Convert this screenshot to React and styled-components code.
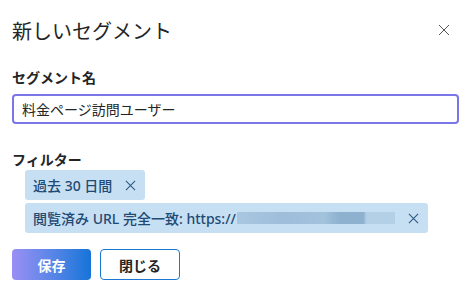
import styled, { createGlobalStyle } from "styled-components";

const GlobalStyle = createGlobalStyle`
  body {
    margin: 0;
    background: #fff;
    font-family: "Noto Sans", "Noto Sans CJK JP", sans-serif;
  }
`;

const CloseIcon = ({ size = 12, color = "currentColor", width = 1.2 }) => (
  <svg width={size} height={size} viewBox="0 0 12 12">
    <path d="M1 1L11 11M11 1L1 11" stroke={color} strokeWidth={width} fill="none" />
  </svg>
);

const App = () => {
  return (
    <>
      <GlobalStyle />
      <Dialog>
        <Header>
          <Title>新しいセグメント</Title>
          <IconButton>
            <CloseIcon size={12} color="#555" width={1} />
          </IconButton>
        </Header>
        <Label>セグメント名</Label>
        <Input>料金ページ訪問ユーザー</Input>
        <Label top={26}>フィルター</Label>
        <Chips>
          <Chip>
            過去 30 日間
            <ChipClose>
              <CloseIcon size={11} color="#2d5a85" />
            </ChipClose>
          </Chip>
          <Chip>
            閲覧済み URL 完全一致: https://
            <Blur />
            <ChipClose>
              <CloseIcon size={11} color="#2d5a85" />
            </ChipClose>
          </Chip>
        </Chips>
        <Actions>
          <Button primary>保存</Button>
          <Button>閉じる</Button>
        </Actions>
      </Dialog>
    </>
  );
};

const Dialog = styled.div`
  width: 473px;
  height: 293px;
  box-sizing: border-box;
  padding: 15px 14px 0 12px;
  display: flex;
  flex-direction: column;
`;

const Header = styled.div`
  display: flex;
  align-items: center;
  justify-content: space-between;
  height: 30px;
`;

const Title = styled.h1`
  margin: 0;
  font-size: 20px;
  font-weight: 400;
  color: #242424;
`;

const IconButton = styled.div`
  display: flex;
  align-items: center;
  padding: 0 9px 0 0;
`;

const Label = styled.div`
  margin-top: ${(p) => p.top || 23}px;
  font-size: 14px;
  font-weight: 700;
  color: #242424;
  line-height: 20px;
`;

const Input = styled.div`
  margin-top: 6px;
  height: 30px;
  box-sizing: border-box;
  border: 2px solid #7b75ea;
  border-radius: 4px;
  padding: 0 8px;
  display: flex;
  align-items: center;
  font-size: 14px;
  color: #242424;
`;

const Chips = styled.div`
  margin-top: 0;
  padding-left: 13px;
  display: flex;
  flex-direction: column;
  align-items: flex-start;
  gap: 3px;
`;

const Chip = styled.div`
  display: flex;
  align-items: center;
  height: 30px;
  box-sizing: border-box;
  padding: 0 9px 0 8px;
  background: #c7dff3;
  border-radius: 3px;
  font-size: 14px;
  font-weight: 500;
  color: #1f4a74;
`;

const Blur = styled.div`
  width: 158px;
  height: 12px;
  margin-left: 1px;
  background: linear-gradient(
    90deg,
    #a9c7e0 0%,
    #9dbdda 30%,
    #a3c2dc 55%,
    #8eb1d0 65%,
    #8eb1d0 80%,
    #b4d0e6 82%,
    #b4d0e6 100%
  );
`;

const ChipClose = styled.span`
  display: flex;
  align-items: center;
  margin-left: 13px;
`;

const Actions = styled.div`
  margin-top: 16px;
  display: flex;
  gap: 9px;
`;

const Button = styled.button`
  width: ${(p) => (p.primary ? 79 : 80)}px;
  height: 31px;
  border-radius: 4px;
  font-family: inherit;
  font-size: 14px;
  font-weight: 700;
  cursor: pointer;
  border: ${(p) => (p.primary ? "none" : "1px solid #1a78d4")};
  background: ${(p) =>
    p.primary ? "linear-gradient(90deg, #9a8ff3 0%, #5a86e8 50%, #1674d8 100%)" : "#fff"};
  color: ${(p) => (p.primary ? "#fff" : "#242424")};
`;

export default App;
